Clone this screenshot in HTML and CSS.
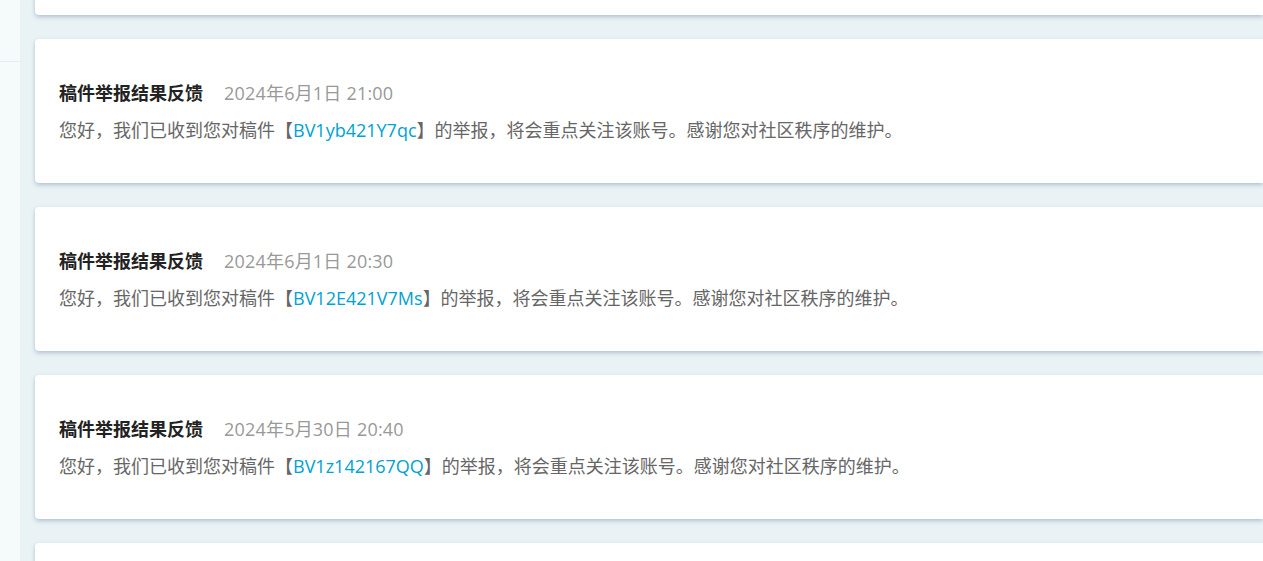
FILE: index.html
```html
<!DOCTYPE html>
<html lang="zh-CN">
<head>
<meta charset="utf-8">
<link rel="stylesheet" href="styles.css">
</head>
<body>
<div class="page">
  <aside class="side"><div class="side-top"></div></aside>
  <main class="main">
    <div class="list">
      <div class="card">
        <div class="head"><span class="title">稿件举报结果反馈</span><span class="date">2024年6月1日 21:30</span></div>
        <div class="body">您好，我们已收到您对稿件【<a class="link">BV1yb421Y7qc</a>】的举报，将会重点关注该账号。感谢您对社区秩序的维护。</div>
      </div>
      <div class="card">
        <div class="head"><span class="title">稿件举报结果反馈</span><span class="date">2024年6月1日 21:00</span></div>
        <div class="body">您好，我们已收到您对稿件【<a class="link">BV1yb421Y7qc</a>】的举报，将会重点关注该账号。感谢您对社区秩序的维护。</div>
      </div>
      <div class="card">
        <div class="head"><span class="title">稿件举报结果反馈</span><span class="date">2024年6月1日 20:30</span></div>
        <div class="body">您好，我们已收到您对稿件【<a class="link">BV12E421V7Ms</a>】的举报，将会重点关注该账号。感谢您对社区秩序的维护。</div>
      </div>
      <div class="card">
        <div class="head"><span class="title">稿件举报结果反馈</span><span class="date">2024年5月30日 20:40</span></div>
        <div class="body">您好，我们已收到您对稿件【<a class="link">BV1z142167QQ</a>】的举报，将会重点关注该账号。感谢您对社区秩序的维护。</div>
      </div>
      <div class="card">
        <div class="head"><span class="title">稿件举报结果反馈</span><span class="date">2024年5月30日 20:00</span></div>
        <div class="body">您好，我们已收到您对稿件【<a class="link">BV1z142167QQ</a>】的举报，将会重点关注该账号。感谢您对社区秩序的维护。</div>
      </div>
    </div>
  </main>
</div>
</body>
</html>
```

FILE: styles.css
```css
html, body {
  margin: 0;
  padding: 0;
  height: 100%;
  overflow: hidden;
}
body {
  background: #e9f3f5;
  font-family: "Open Sans", "Noto Sans CJK SC", sans-serif;
}
.page {
  display: flex;
  height: 100%;
}
.side {
  width: 20px;
  flex: 0 0 20px;
  background: #f5fafb;
}
.side-top {
  height: 61px;
  border-bottom: 1px solid #e4eef0;
}
.main {
  flex: 1;
  padding-left: 15px;
  overflow: hidden;
}
.list {
  display: flex;
  flex-direction: column;
  gap: 24px;
  margin-top: -129px;
}
.card {
  height: 144px;
  box-sizing: border-box;
  background: #fff;
  border-radius: 4px 0 0 4px;
  box-shadow: 0 2px 4px rgba(110, 130, 170, 0.45);
  padding: 2px 24px 0;
  display: flex;
  flex-direction: column;
  justify-content: center;
  gap: 10px;
}
.head {
  display: flex;
  align-items: center;
  gap: 21px;
  line-height: 27px;
  font-size: 18px;
}
.title {
  font-weight: bold;
  color: #222;
}
.date {
  color: #999;
  letter-spacing: 0.2px;
}
.body {
  font-size: 18px;
  line-height: 27px;
  color: #666;
}
.link {
  color: #00a1d6;
  text-decoration: none;
}
```
